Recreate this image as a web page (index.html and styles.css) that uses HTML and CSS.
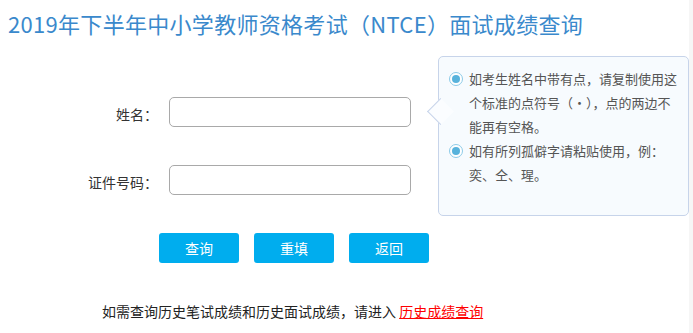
FILE: index.html
```html
<!DOCTYPE html>
<html lang="zh-CN">
<head>
<meta charset="utf-8">
<title>成绩查询</title>
<link rel="stylesheet" href="styles.css">
</head>
<body>
<div class="page">
  <h1 class="title">2019年下半年中小学教师资格考试（NTCE）面试成绩查询</h1>
  <div class="main">
    <div class="form">
      <div class="row">
        <label class="label">姓名：</label>
        <input class="field" type="text">
      </div>
      <div class="row">
        <label class="label">证件号码：</label>
        <input class="field" type="text">
      </div>
    </div>
    <div class="tip">
      <span class="arrow"></span>
      <div class="item">
        <span class="radio"></span>
        <p>如考生姓名中带有点，请复制使用这个标准的点符号（·），点的两边不能再有空格。</p>
      </div>
      <div class="item">
        <span class="radio"></span>
        <p>如有所列孤僻字请粘贴使用，例：奕、仝、瑆。</p>
      </div>
    </div>
  </div>
  <div class="buttons">
    <button class="btn">查询</button>
    <button class="btn">重填</button>
    <button class="btn">返回</button>
  </div>
  <p class="footer">如需查询历史笔试成绩和历史面试成绩，请进入 <a class="link" href="#">历史成绩查询</a></p>
</div>
</body>
</html>
```

FILE: styles.css
```css
* { box-sizing: border-box; }
html, body {
  margin: 0;
  padding: 0;
  background: #f6f6f6;
  font-family: "Noto Sans CJK SC", "Noto Sans", sans-serif;
}
.page {
  width: 689px;
  height: 333px;
  background: #ffffff;
  overflow: hidden;
}
.title {
  margin: 0;
  padding: 8px 0 0 8px;
  height: 56px;
  font-size: 22px;
  line-height: 30px;
  font-weight: normal;
  color: #3a89cc;
  letter-spacing: 0.3px;
  white-space: nowrap;
}
.main {
  display: flex;
  align-items: flex-start;
}
.form {
  width: 425px;
  padding-top: 41px;
  display: flex;
  flex-direction: column;
  gap: 38px;
}
.row {
  display: flex;
  align-items: center;
}
.label {
  width: 158px;
  text-align: right;
  font-size: 14px;
  color: #333;
  margin-right: 11px;
  padding-top: 3px;
}
.field {
  width: 242px;
  height: 30px;
  border: 1px solid #a9a9a9;
  border-radius: 5px;
  background: #fff;
  margin: 0;
}
.tip {
  position: relative;
  margin-left: 13px;
  width: 251px;
  height: 160px;
  border: 1px solid #c7d4ea;
  border-radius: 5px;
  background: #f7fbfe;
  padding: 10px 8px 0 10px;
}
.arrow {
  position: absolute;
  left: -8px;
  top: 45px;
  width: 19px;
  height: 19px;
  background: #fbfdff;
  border-left: 1px solid #c7d4ea;
  border-bottom: 1px solid #c7d4ea;
  transform: rotate(45deg);
}
.item {
  display: flex;
  align-items: flex-start;
}
.item p {
  margin: 0;
  font-size: 13px;
  line-height: 24px;
  color: #555;
  width: 212px;
}
.radio {
  flex: none;
  width: 14px;
  height: 14px;
  margin: 5px 6px 0 0;
  border: 1px solid #8ccbe8;
  border-radius: 50%;
  background: #fff;
  position: relative;
}
.radio::after {
  content: "";
  position: absolute;
  left: 2px;
  top: 2px;
  width: 8px;
  height: 8px;
  border-radius: 50%;
  background: #58b3dc;
}
.buttons {
  display: flex;
  gap: 15px;
  padding-left: 159px;
  margin-top: 17px;
}
.btn {
  width: 80px;
  height: 30px;
  border: none;
  border-radius: 3px;
  background: #00adee;
  color: #fff;
  font-family: "Noto Sans CJK SC", sans-serif;
  font-size: 14px;
  padding: 0;
}
.footer {
  margin: 38px 0 0 102px;
  font-size: 14px;
  line-height: 20px;
  color: #222;
}
.link {
  color: #ff0000;
  text-decoration: underline;
}
```
